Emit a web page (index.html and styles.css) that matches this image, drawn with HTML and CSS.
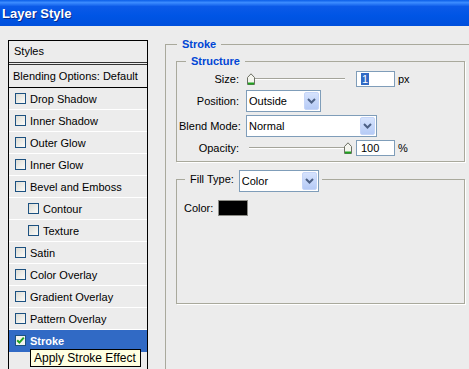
FILE: index.html
```html
<!DOCTYPE html>
<html lang="en">
  <head>
    <meta charset="UTF-8" />
    <title>Layer Style</title>
    <link rel="stylesheet" href="styles.css">
  </head>
  <body>
    <div class="titlebar">Layer Style</div>

    <div class="dialog">
      <!-- left: list of effects -->
      <div class="styles-list">
        <div class="list-head">Styles</div>
        <div class="list-blend">Blending Options: Default</div>
        <ul class="effects">
          <li><span class="check"></span>Drop Shadow</li>
          <li><span class="check"></span>Inner Shadow</li>
          <li><span class="check"></span>Outer Glow</li>
          <li><span class="check"></span>Inner Glow</li>
          <li><span class="check"></span>Bevel and Emboss</li>
          <li class="sub"><span class="check"></span>Contour</li>
          <li class="sub"><span class="check"></span>Texture</li>
          <li><span class="check"></span>Satin</li>
          <li><span class="check"></span>Color Overlay</li>
          <li><span class="check"></span>Gradient Overlay</li>
          <li><span class="check"></span>Pattern Overlay</li>
          <li class="selected">
            <span class="check">
              <svg width="9" height="9" viewBox="0 0 9 9"><path d="M1.2 4.2 L3.4 6.6 L7.8 1.6" fill="none" stroke="#21a121" stroke-width="2"/></svg>
            </span>Stroke
          </li>
        </ul>
        <div class="tooltip">Apply Stroke Effect</div>
      </div>

      <!-- right: stroke settings -->
      <div class="settings">
        <fieldset class="group outer">
          <legend>Stroke</legend>

          <fieldset class="group structure">
            <legend>Structure</legend>
            <div class="form">
              <label>Size:</label>
              <div class="ctl">
                <div class="slider">
                  <span class="thumb" style="left: 1px">
                    <svg width="8" height="12" viewBox="0 0 8 12"><path d="M0.5 4.5 L4 0.8 L7.5 4.5 V11.5 H0.5 Z" fill="#f4f4ee" stroke="#6b6f63"/><path d="M1 10.5 H7" stroke="#1fa31f" stroke-width="2"/></svg>
                  </span>
                </div>
                <span class="num"><span class="hl">1</span></span>
                <span class="unit">px</span>
              </div>

              <label>Position:</label>
              <div class="select pos">
                <span class="val">Outside</span>
                <span class="arrow"><svg width="9" height="6" viewBox="0 0 9 6"><path d="M1 1 L4.5 4.5 L8 1" fill="none" stroke="#4d6185" stroke-width="2"/></svg></span>
              </div>

              <label>Blend Mode:</label>
              <div class="select blend">
                <span class="val">Normal</span>
                <span class="arrow"><svg width="9" height="6" viewBox="0 0 9 6"><path d="M1 1 L4.5 4.5 L8 1" fill="none" stroke="#4d6185" stroke-width="2"/></svg></span>
              </div>

              <label>Opacity:</label>
              <div class="ctl">
                <div class="slider">
                  <span class="thumb" style="right: 0">
                    <svg width="8" height="12" viewBox="0 0 8 12"><path d="M0.5 4.5 L4 0.8 L7.5 4.5 V11.5 H0.5 Z" fill="#f4f4ee" stroke="#6b6f63"/><path d="M1 10.5 H7" stroke="#1fa31f" stroke-width="2"/></svg>
                  </span>
                </div>
                <span class="num">100</span>
                <span class="unit">%</span>
              </div>
            </div>
          </fieldset>

          <fieldset class="group fill">
            <legend>
              <label>Fill Type:</label>
              <div class="select type">
                <span class="val">Color</span>
                <span class="arrow"><svg width="9" height="6" viewBox="0 0 9 6"><path d="M1 1 L4.5 4.5 L8 1" fill="none" stroke="#4d6185" stroke-width="2"/></svg></span>
              </div>
            </legend>
            <div class="color-row">
              <span>Color:</span>
              <span class="swatch"></span>
            </div>
          </fieldset>
        </fieldset>
      </div>
    </div>
  </body>
</html>
```

FILE: styles.css
```css
/* base */
body {
  margin: 0;
  height: 369px;
  overflow: hidden;
  background: #ececec;
  font-family: "Liberation Sans", Arial, sans-serif;
  font-size: 11px;
  color: #000;
}

/* XP title bar */
.titlebar {
  height: 26px;
  line-height: 27px;
  padding-left: 2px;
  background: linear-gradient(#0a5ee8 0%, #3c8cff 10%, #0b5ae8 25%, #0055e5 60%, #0050dc 100%);
  color: #fff;
  font-weight: bold;
  font-size: 13px;
  text-shadow: 1px 1px 0 #0a2a8a;
}

.dialog {
  display: flex;
  align-items: flex-start;
  gap: 17px;
  padding: 12px 0 0 8px;
}

/* styles list */
.styles-list {
  position: relative;
  width: 138px;
  height: 360px;
  margin-top: 2px;
  border: 1px solid #000;
  border-bottom: none;
}

.list-head {
  height: 21px;
  line-height: 21px;
  padding-left: 5px;
  border-bottom: 3px double #333;
}

.list-blend {
  height: 22px;
  line-height: 22px;
  padding-left: 4px;
  border-bottom: 1px solid #000;
}

.effects {
  list-style: none;
  margin: 0;
  padding: 0;
}

.effects li {
  display: flex;
  align-items: center;
  gap: 4px;
  height: 21px;
  padding-left: 6px;
  border-bottom: 1px solid #fff;
}

.effects li.sub {
  padding-left: 19px;
}

.effects li.selected {
  background: #316ac5;
  color: #fff;
  font-weight: bold;
  border-bottom-color: #316ac5;
}

.check {
  display: flex;
  align-items: center;
  justify-content: center;
  width: 9px;
  height: 9px;
  border: 1px solid #1c5180;
  background: linear-gradient(135deg, #dcdcd5, #fbfbf9);
}

.selected .check {
  background: #f2f2ee;
}

.tooltip {
  position: absolute;
  left: 21px;
  top: 308px;
  padding: 1px 4px 1px 3px;
  border: 1px solid #000;
  background: #ffffe1;
  font-size: 12px;
  line-height: 14px;
  white-space: nowrap;
}

/* settings */
.settings {
  flex: 1;
}

.group {
  margin: 0;
  min-width: 0;
  border: 1px solid #a9a99c;
  box-shadow: 1px 1px 0 #fff;
}

.group > legend {
  color: #0046d5;
  font-weight: bold;
  line-height: 13px;
  padding: 0 5px;
}

.outer {
  margin-right: -8px;
  padding: 0 11px 120px 10px;
}

.outer > legend {
  margin-left: 1px;
}

.structure {
  margin-top: 4px;
  padding: 3px 0 5px 2px;
}

.structure > legend {
  margin-left: 7px;
}

.form {
  display: grid;
  grid-template-columns: 60px auto;
  column-gap: 7px;
  row-gap: 3px;
  align-items: center;
}

.form label {
  text-align: right;
  white-space: nowrap;
}

.ctl {
  display: flex;
  align-items: center;
}

.slider {
  position: relative;
  width: 106px;
  height: 13px;
}

.slider::before {
  content: "";
  position: absolute;
  left: 3px;
  right: 7px;
  top: 5px;
  border-top: 1px solid #a4a49a;
  border-bottom: 1px solid #fff;
}

.thumb {
  position: absolute;
  top: 0;
  display: block;
  height: 12px;
}

.thumb svg {
  display: block;
}

.num {
  width: 33px;
  height: 14px;
  line-height: 14px;
  margin-left: 4px;
  padding-left: 4px;
  border: 1px solid #7f9db9;
  background: #fff;
  color: #000;
}

.num .hl {
  background: #316ac5;
  color: #fff;
  padding: 0 1px;
}

.unit {
  margin-left: 3px;
}

.select {
  display: flex;
  height: 20px;
  border: 1px solid #7f9db9;
  background: #fff;
  color: #000;
  font-weight: normal;
}

.select .val {
  flex: 1;
  padding-left: 2px;
  line-height: 20px;
}

.select .arrow {
  display: flex;
  align-items: center;
  justify-content: center;
  width: 15px;
  margin: 1px;
  border: 1px solid #c5d5f8;
  border-radius: 2px;
  background: linear-gradient(#d6e3fd, #b6cbf6);
  box-sizing: border-box;
}

.select.pos {
  width: 73px;
}

.select.blend {
  width: 129px;
}

/* fill type */
.fill {
  margin-top: 8px;
  padding: 12px 0 87px 7px;
}

.fill > legend {
  display: flex;
  align-items: flex-start;
  gap: 5px;
  margin-left: 1px;
  padding: 0 3px 0 5px;
  color: #000;
  font-weight: normal;
}

.fill > legend label {
  line-height: 18px;
}

.select.type {
  width: 78px;
  margin-bottom: -6px;
}

.color-row {
  display: flex;
  align-items: center;
  gap: 5px;
}

.swatch {
  width: 28px;
  height: 14px;
  border: 1px solid #8b8b85;
  background: #000;
}
```
